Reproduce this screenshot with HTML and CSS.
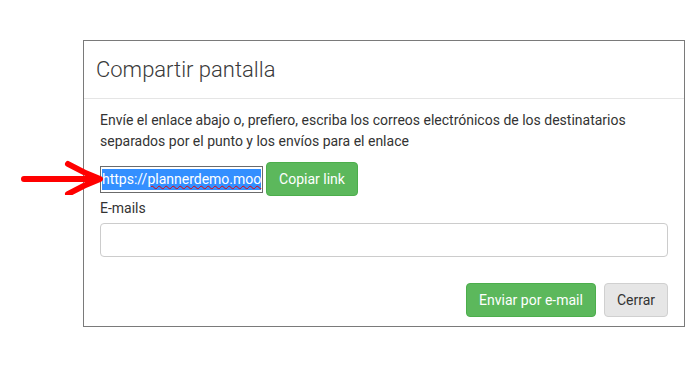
FILE: index.html
```html
<!DOCTYPE html>
<html lang="es">
<head>
<meta charset="utf-8">
<title>Compartir pantalla</title>
<link rel="stylesheet" href="styles.css">
</head>
<body>
<svg class="arrow" width="90" height="40" viewBox="0 0 90 40">
  <path d="M6 24 L78 24" stroke="#f00" stroke-width="6" stroke-linecap="round" fill="none"/>
  <path d="M50 9 Q66 18 82 24 Q66 30 50 39" stroke="#f00" stroke-width="6" stroke-linecap="round" stroke-linejoin="round" fill="none"/>
</svg>
<div class="dialog">
  <div class="header"><h1 class="title">Compartir pantalla</h1></div>
  <div class="body">
    <p class="intro">Envíe el enlace abajo o, prefiero, escriba los correos electrónicos de los destinatarios separados por el punto y los envíos para el enlace</p>
    <div class="link-row">
      <div class="link-box"><span class="sel">https://<span class="spell">plannerdemo.moo</span></span></div>
      <button class="btn btn-green">Copiar link</button>
    </div>
    <div class="label">E-mails</div>
    <div class="emails"></div>
  </div>
  <div class="footer">
    <button class="btn btn-green">Enviar por e-mail</button>
    <button class="btn btn-gray">Cerrar</button>
  </div>
</div>
</body>
</html>
```
FILE: styles.css
```css
html, body {
  margin: 0;
  padding: 0;
  background: #fff;
  font-family: Roboto, "Liberation Sans", sans-serif;
  color: #333;
  font-size: 14px;
}
.arrow {
  position: absolute;
  left: 18px;
  top: 155px;
}
.dialog {
  margin: 40px 0 0 83px;
  width: 600px;
  height: 285px;
  border: 1px solid #7a7a7a;
  display: flex;
  flex-direction: column;
}
.header {
  padding: 15px 12px;
  border-bottom: 1px solid #e5e5e5;
}
.title {
  margin: 0;
  font-family: "Roboto Light", Roboto, "Liberation Sans", sans-serif;
  font-size: 22px;
  font-weight: 300;
  line-height: 27px;
  color: #3a3a3a;
}
.body {
  padding: 11px 16px 0;
}
.intro {
  margin: 0 0 10px;
  line-height: 21px;
}
.link-row {
  display: flex;
  align-items: center;
  gap: 3px;
  height: 34px;
}
.link-box {
  box-sizing: border-box;
  width: 163px;
  height: 27px;
  border: 1px solid #6b6b6b;
  padding: 2px 1px;
  overflow: hidden;
  white-space: nowrap;
  line-height: 21px;
  font-size: 14px;
}
.sel {
  background: #338fff;
  color: #fff;
  display: inline-block;
}
.spell {
  text-decoration: underline wavy #e00;
  text-decoration-thickness: 1px;
  text-underline-offset: 1px;
}
.btn {
  font-family: Roboto, "Liberation Sans", sans-serif;
  font-size: 14px;
  height: 34px;
  border-radius: 4px;
  padding: 0 12px;
  border: 1px solid transparent;
  cursor: pointer;
}
.btn-green {
  background: #5cb85c;
  border-color: #4cae4c;
  color: #fff;
}
.link-row .btn-green {
  width: 92px;
}
.btn-gray {
  background: #e6e6e6;
  border-color: #d0d0d0;
  color: #333;
}
.label {
  margin-top: 2px;
  line-height: 21px;
}
.emails {
  margin-top: 4px;
  height: 32px;
  border: 1px solid #ccc;
  border-radius: 4px;
}
.footer {
  display: flex;
  justify-content: flex-end;
  gap: 8px;
  padding: 26px 16px 0;
}
.footer .btn-green {
  width: 130px;
}
.footer .btn-gray {
  width: 64px;
}
```
